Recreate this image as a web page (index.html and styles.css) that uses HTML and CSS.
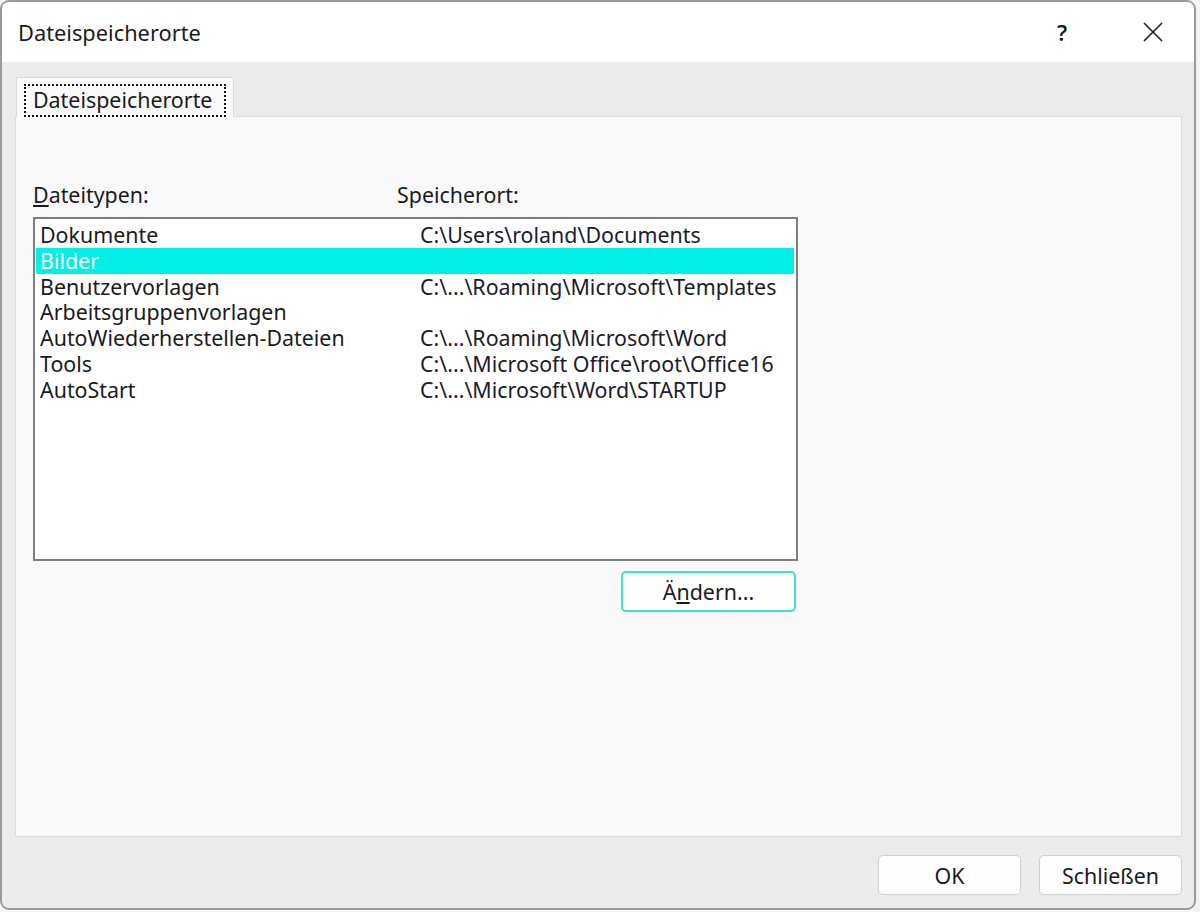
FILE: index.html
```html
<!DOCTYPE html>
<html lang="de">
<head>
    <meta charset="UTF-8">
    <title>Dateispeicherorte</title>
    <link rel="stylesheet" href="styles.css">
</head>
<body>
    <div class="dialog">
        <div class="titlebar">
            <span class="title">Dateispeicherorte</span>
            <div class="controls">
                <span class="help">?</span>
                <svg class="close" width="20" height="20" viewBox="0 0 20 20">
                    <path d="M1 1 L19 19 M19 1 L1 19" stroke="#1a1a1a" stroke-width="1.6" fill="none"/>
                </svg>
            </div>
        </div>

        <div class="body">
            <div class="tabs">
                <div class="tab active"><span class="focus">Dateispeicherorte</span></div>
            </div>

            <div class="panel">
                <div class="labels">
                    <span class="col-type"><u>D</u>ateitypen:</span>
                    <span>Speicherort:</span>
                </div>

                <ul class="list">
                    <li><span class="col-type">Dokumente</span><span class="path">C:\Users\roland\Documents</span></li>
                    <li class="selected"><span class="col-type">Bilder</span><span class="path"></span></li>
                    <li><span class="col-type">Benutzervorlagen</span><span class="path">C:\...\Roaming\Microsoft\Templates</span></li>
                    <li><span class="col-type">Arbeitsgruppenvorlagen</span><span class="path"></span></li>
                    <li><span class="col-type">AutoWiederherstellen-Dateien</span><span class="path">C:\...\Roaming\Microsoft\Word</span></li>
                    <li><span class="col-type">Tools</span><span class="path">C:\...\Microsoft Office\root\Office16</span></li>
                    <li><span class="col-type">AutoStart</span><span class="path">C:\...\Microsoft\Word\STARTUP</span></li>
                </ul>

                <div class="list-actions">
                    <button class="btn btn-focus">Ä<u>n</u>dern...</button>
                </div>
            </div>

            <div class="footer">
                <button class="btn btn-footer">OK</button>
                <button class="btn btn-footer">Schließen</button>
            </div>
        </div>
    </div>
</body>
</html>
```

FILE: styles.css
```css
* {
    margin: 0;
    padding: 0;
    box-sizing: border-box;
}

body {
    width: 1200px;
    height: 912px;
    background: #f3f3f3;
    font-family: "Noto Sans", "Open Sans", sans-serif;
    color: #1b1b1b;
    overflow: hidden;
}

.dialog {
    width: 1196px;
    height: 910px;
    border: 2px solid #9a9a9a;
    border-radius: 9px;
    overflow: hidden;
    display: flex;
    flex-direction: column;
    background: #ebebeb;
}

.titlebar {
    height: 60px;
    background: #ffffff;
    display: flex;
    align-items: center;
    justify-content: space-between;
    padding-left: 16px;
}

.title {
    font-size: 21.8px;
}

.controls {
    display: flex;
    align-items: center;
    height: 100%;
}

.help {
    font-size: 22px;
    width: 30px;
    text-align: center;
    font-weight: 600;
    margin-right: 66px;
}

.close {
    margin-right: 31px;
}

.body {
    flex: 1;
    display: flex;
    flex-direction: column;
    padding: 15px 12px 0 13px;
}

.tabs {
    display: flex;
    height: 40px;
}

.tab {
    width: 218px;
    background: #f9f9f9;
    border: 1px solid #dcdcdc;
    border-bottom: none;
    padding: 6px 7px 0 7px;
    position: relative;
    z-index: 1;
    margin-left: 1px;
}

.focus {
    display: block;
    height: 33px;
    border: 2px dotted #111;
    font-size: 21.4px;
    line-height: 28px;
    padding-left: 7px;
    white-space: nowrap;
}

.panel {
    height: 721px;
    background: #f9f9f9;
    border: 1px solid #dcdcdc;
    margin-top: -1px;
    padding: 66px 0 0 17px;
}

.labels {
    display: flex;
    font-size: 21.4px;
    line-height: 24px;
    margin-bottom: 10px;
}

.labels .col-type {
    width: 364px;
}

.list {
    list-style: none;
    width: 765px;
    height: 344px;
    border: 2px solid #7f7f7f;
    background: #ffffff;
    padding: 3px 2px 0 1px;
    font-size: 21.4px;
}

.list li {
    display: flex;
    height: 25.8px;
    line-height: 25.8px;
    padding-left: 4px;
    white-space: nowrap;
}

.list .col-type {
    width: 380px;
}

.list .path {
    color: #1c1c2a;
}

.list li.selected {
    background: #00efe7;
    color: #ffffff;
}

.list-actions {
    width: 765px;
    display: flex;
    justify-content: flex-end;
    padding-right: 2px;
    margin-top: 10px;
}

.btn {
    font-family: "Noto Sans", "Open Sans", sans-serif;
    font-size: 21.4px;
    color: #1b1b1b;
    background: #fdfdfd;
    border: 1px solid #d0d0d0;
    border-radius: 5px;
}

.btn-focus {
    width: 175px;
    height: 41px;
    border: 2px solid #3fe0cc;
}

.footer {
    flex: 1;
    display: flex;
    justify-content: flex-end;
    align-items: flex-start;
    gap: 18px;
    padding-top: 18px;
}

.btn-footer {
    width: 143px;
    height: 40px;
}
```
